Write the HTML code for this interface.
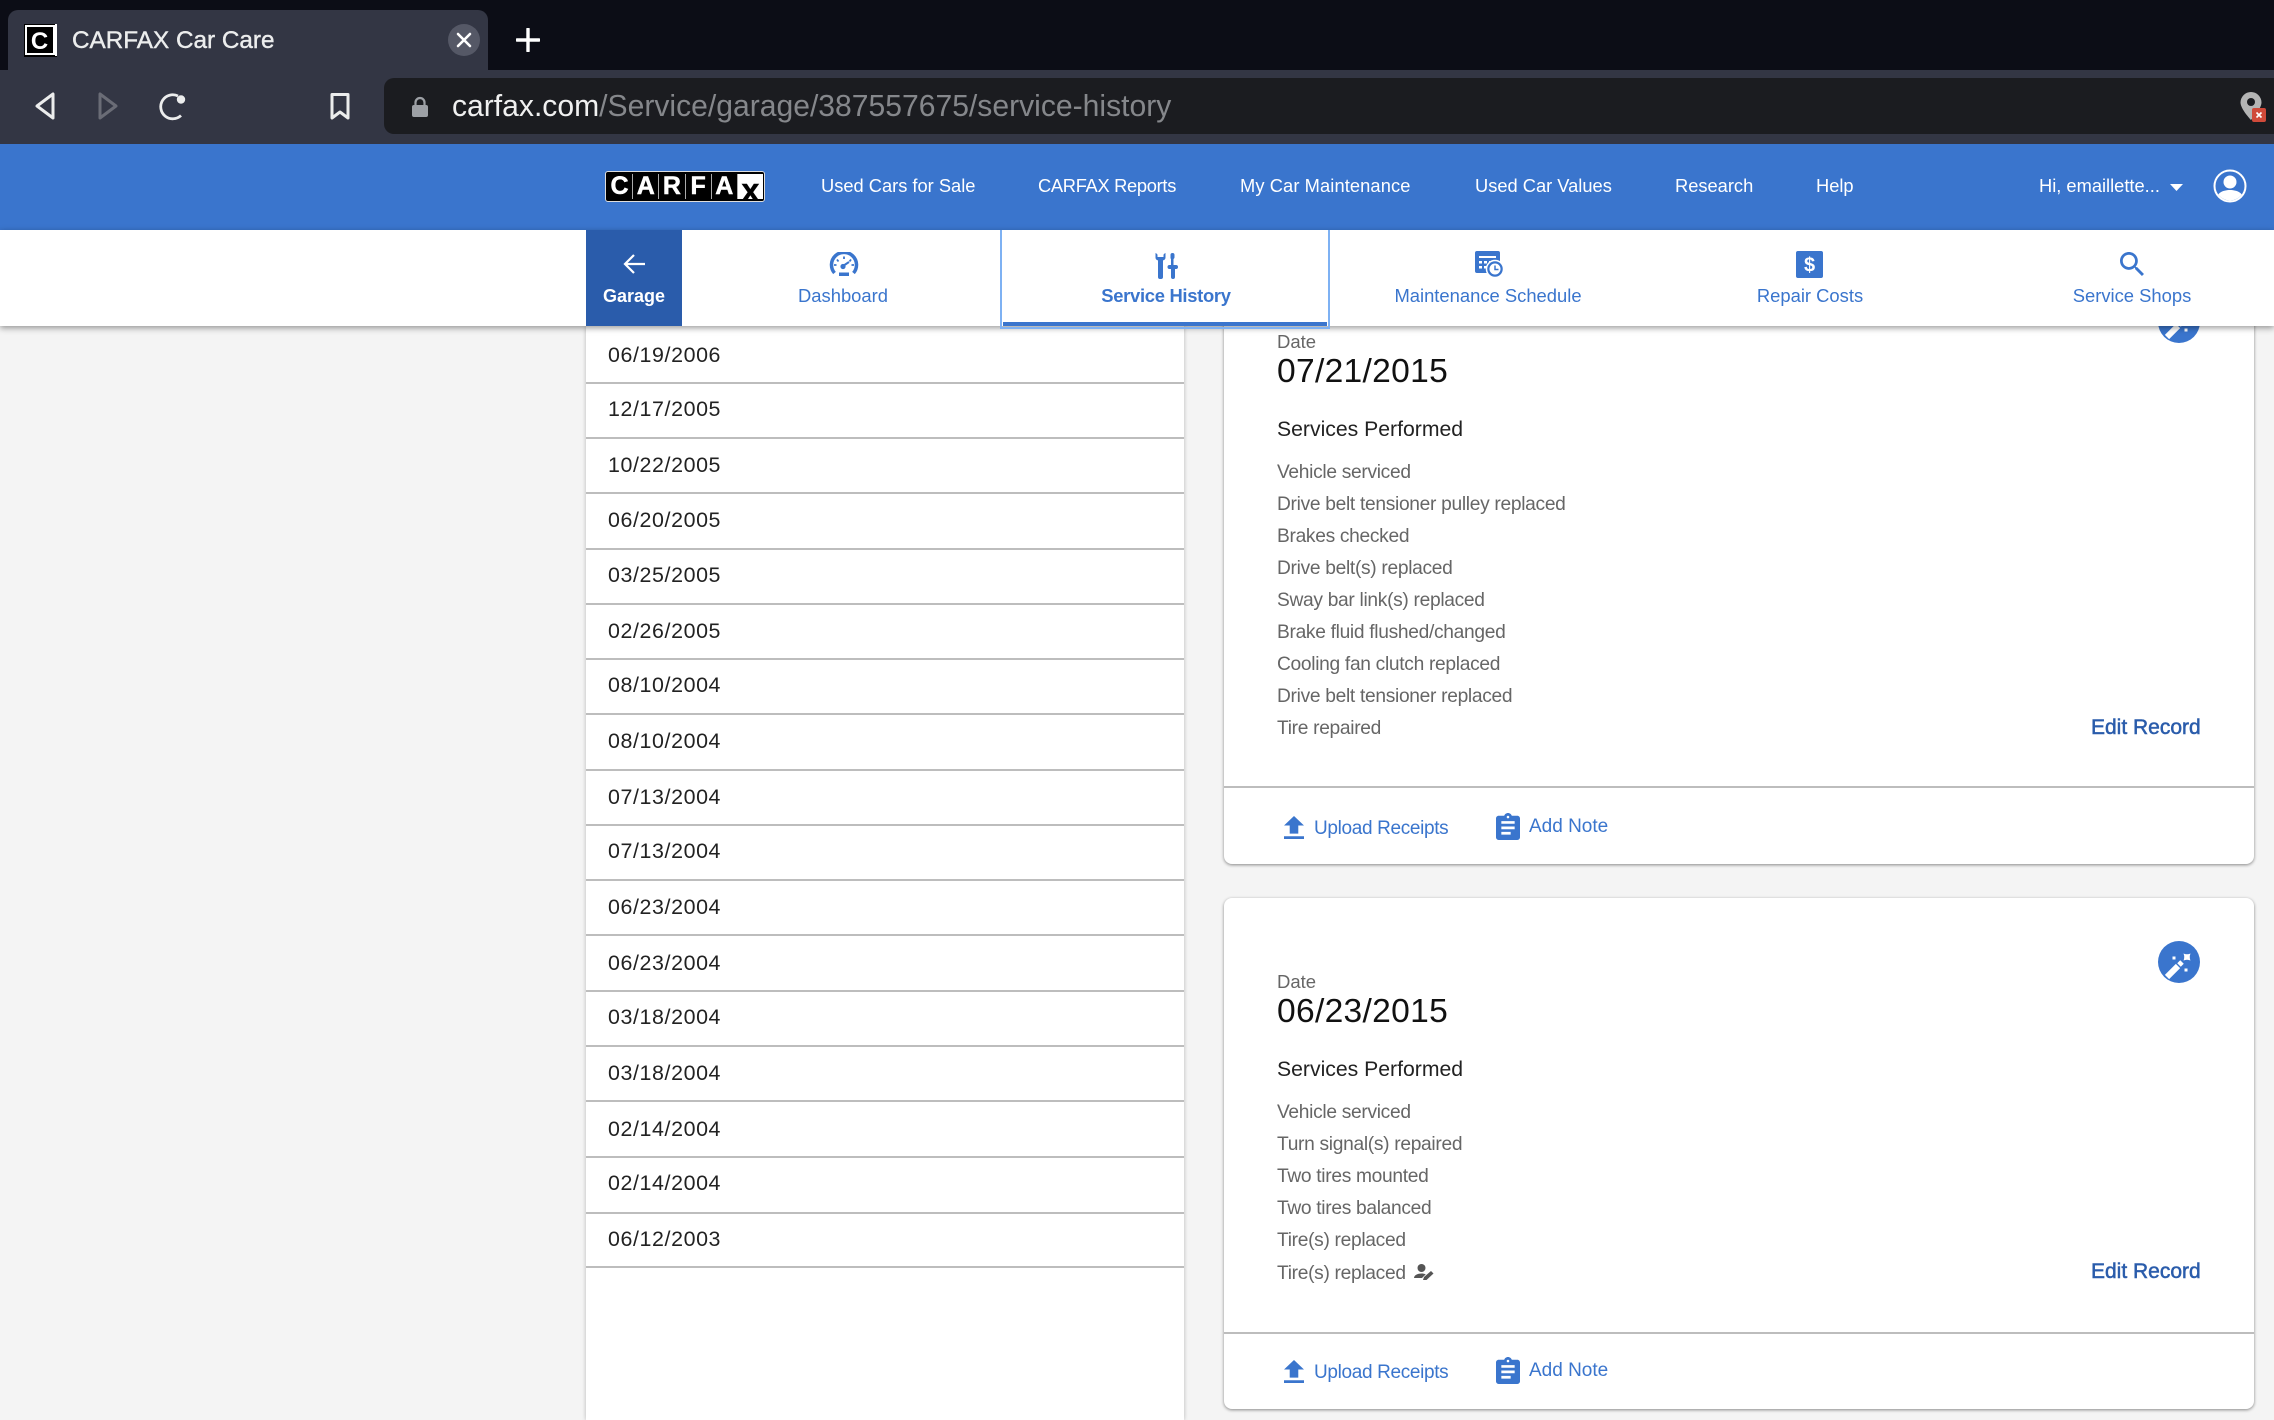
<!DOCTYPE html>
<html><head><meta charset="utf-8"><title>CARFAX Car Care</title>
<style>
html,body{margin:0;padding:0;width:2274px;height:1420px;overflow:hidden;background:#f4f4f4;font-family:"Liberation Sans",sans-serif}
.a{position:absolute}
.t{position:absolute;white-space:nowrap;line-height:0;margin-top:1px}
.c{transform:translateX(-50%)}
.n{font-size:18.3px;color:#fff;margin-top:1px}
.s{font-size:18.400px;color:#3a75cd}
.d{font-size:21.4px;color:#222;left:608px;letter-spacing:.6px}
.l{height:2px;background:#bdbdbd;left:586px;width:598px}
.li{font-size:19.2px;color:#666;left:1277px;letter-spacing:-.31px;margin-top:2px}
.dt{font-size:18.5px;color:#666;left:1277px;margin-top:0}
.dv{font-size:33.6px;color:#111;left:1277px;letter-spacing:.3px}
.sp{font-size:21.2px;color:#222;left:1277px;margin-top:2px}
.er{font-size:21px;color:#2a5cab;-webkit-text-stroke:.5px #2a5cab;left:2091px;margin-top:1.500px}
.u{font-size:19px;color:#3a75cd;margin-top:2px}
.card{position:absolute;left:1224px;width:1030px;background:#fff;border-radius:8px;box-shadow:0 1px 3px rgba(0,0,0,.45)}
</style></head><body>

<div class="a" style="left:0;top:0;width:2274px;height:70px;background:#0c0d16"></div>
<div class="a" style="left:8px;top:10px;width:480px;height:60px;background:#333644;border-radius:10px 10px 0 0"></div>
<div class="a" style="left:0;top:70px;width:2274px;height:74px;background:#333644"></div>
<div class="a" style="left:384px;top:78px;width:1890px;height:56px;background:#1b1c20;border-radius:10px 0 0 10px"></div>

<svg class="a" style="left:24px;top:24px" width="33" height="33" viewBox="0 0 33 33"><rect width="33" height="33" fill="#000"/><rect x="2" y="2" width="28" height="28" fill="none" stroke="#fff" stroke-width="2"/><rect x="31" y="0" width="2" height="32" fill="#fff"/><text x="15.5" y="25" font-family="Liberation Sans" font-size="24" font-weight="bold" fill="#fff" text-anchor="middle">C</text></svg>
<div class="t" style="left:72px;top:40px;margin-top:.5px;font-size:24.3px;color:#eceded;-webkit-text-stroke:.4px #eceded">CARFAX Car Care</div>
<div class="a" style="left:448px;top:24px;width:32px;height:32px;border-radius:50%;background:#555866"></div>
<svg class="a" style="left:448px;top:24px" width="32" height="32"><path d="M10 10L22 22M22 10L10 22" stroke="#fff" stroke-width="2.6" stroke-linecap="round"/></svg>
<svg class="a" style="left:516px;top:28px" width="24" height="24"><path d="M12 1V23M1 12H23" stroke="#fff" stroke-width="3.4" stroke-linecap="round"/></svg>

<svg class="a" style="left:34px;top:91px" width="22" height="30"><path d="M19 3V27L3 15Z" fill="none" stroke="#eceded" stroke-width="3" stroke-linejoin="round"/></svg>
<svg class="a" style="left:97px;top:91px" width="22" height="30"><path d="M3 3V27L19 15Z" fill="none" stroke="#6a6c76" stroke-width="3" stroke-linejoin="round"/></svg>
<svg class="a" style="left:158px;top:92px" width="30" height="30"><path d="M23 23.5A12 12 0 1 1 20 4" fill="none" stroke="#eceded" stroke-width="2.8"/><circle cx="23" cy="7.5" r="4.2" fill="#eceded"/></svg>
<svg class="a" style="left:329px;top:92px" width="22" height="29"><path d="M3 2.5H19V26L11 20L3 26Z" fill="none" stroke="#eceded" stroke-width="3" stroke-linejoin="round"/></svg>
<svg class="a" style="left:411px;top:96px" width="18" height="22"><path d="M4.5 10V6.5a4.5 4.5 0 0 1 9 0V10" fill="none" stroke="#9da0a5" stroke-width="2.2"/><rect x="1" y="9" width="16" height="12" rx="2" fill="#9da0a5"/></svg>
<div class="t" style="left:452px;top:106px;margin-top:1px;font-size:30.1px"><span style="color:#f0f0f0">carfax.com</span><span style="color:#85878b">/Service/garage/387557675/service-history</span></div>
<svg class="a" style="left:2238px;top:90px" width="30" height="34"><path d="M13 2a10.500 10.500 0 0 0-10.500 10.500C2.500 19 13 30 13 30s10.500-11 10.500-17.500A10.500 10.500 0 0 0 13 2z" fill="#b4b4b4"/><circle cx="13" cy="12" r="4" fill="#1b1c20"/><rect x="14" y="18" width="14" height="14" rx="2" fill="#d04a3a"/><path d="M18.500 22.500L23.500 27.500M23.500 22.500L18.500 27.500" stroke="#fff" stroke-width="1.600"/></svg>

<div class="a" style="left:0;top:144px;width:2274px;height:86px;background:#3a75cd"></div>
<div class="a" style="left:605px;top:171px;width:160px;height:31px;background:#000;border:1px solid #ddd;box-sizing:border-box;border-radius:3px;display:flex;padding:2px 1px;font-weight:bold;font-size:25px;color:#fff;line-height:25px;text-align:center;-webkit-text-stroke:.5px #fff">
<span style="flex:1;border-right:1px solid #aaa">C</span><span style="flex:1;border-right:1px solid #aaa">A</span><span style="flex:1;border-right:1px solid #aaa">R</span><span style="flex:1;border-right:1px solid #aaa">F</span><span style="flex:1;border-right:1px solid #aaa">A</span><span style="flex:1;background:#fff;color:#000;font-size:32px;line-height:32px;overflow:hidden;-webkit-text-stroke:.5px #000">x</span></div>
<div class="t n" style="left:821px;top:185px">Used Cars for Sale</div>
<div class="t n" style="left:1038px;top:185px;letter-spacing:-.3px">CARFAX Reports</div>
<div class="t n" style="left:1240px;top:185px;letter-spacing:.1px">My Car Maintenance</div>
<div class="t n" style="left:1475px;top:185px">Used Car Values</div>
<div class="t n" style="left:1675px;top:185px">Research</div>
<div class="t n" style="left:1816px;top:185px">Help</div>
<div class="t n" style="left:2039px;top:185px">Hi, emaillette...</div>
<svg class="a" style="left:2170px;top:184px" width="13" height="7"><path d="M0 0H13L6.500 7Z" fill="#fff"/></svg>
<svg class="a" style="left:2213px;top:169px" width="34" height="34"><defs><clipPath id="uc"><circle cx="17" cy="17" r="14.500"/></clipPath></defs><circle cx="17" cy="17" r="15.500" fill="none" stroke="#fff" stroke-width="2"/><g clip-path="url(#uc)" fill="#fff"><circle cx="17" cy="13" r="6.500"/><path d="M3 32C3 24 10 21 17 21S31 24 31 32Z"/></g></svg>

<!-- main content -->
<div class="a" style="left:586px;top:326px;width:598px;height:1094px;background:#fff;box-shadow:0 0 4px rgba(0,0,0,.25)"></div>
<div class="t d" style="top:354px">06/19/2006</div><div class="a l" style="top:382px"></div>
<div class="t d" style="top:408px">12/17/2005</div><div class="a l" style="top:437px"></div>
<div class="t d" style="top:464px">10/22/2005</div><div class="a l" style="top:492px"></div>
<div class="t d" style="top:519px">06/20/2005</div><div class="a l" style="top:548px"></div>
<div class="t d" style="top:574px">03/25/2005</div><div class="a l" style="top:603px"></div>
<div class="t d" style="top:630px">02/26/2005</div><div class="a l" style="top:658px"></div>
<div class="t d" style="top:684px">08/10/2004</div><div class="a l" style="top:713px"></div>
<div class="t d" style="top:740px">08/10/2004</div><div class="a l" style="top:769px"></div>
<div class="t d" style="top:796px">07/13/2004</div><div class="a l" style="top:824px"></div>
<div class="t d" style="top:850px">07/13/2004</div><div class="a l" style="top:879px"></div>
<div class="t d" style="top:906px">06/23/2004</div><div class="a l" style="top:934px"></div>
<div class="t d" style="top:962px">06/23/2004</div><div class="a l" style="top:990px"></div>
<div class="t d" style="top:1016px">03/18/2004</div><div class="a l" style="top:1045px"></div>
<div class="t d" style="top:1072px">03/18/2004</div><div class="a l" style="top:1100px"></div>
<div class="t d" style="top:1128px">02/14/2004</div><div class="a l" style="top:1156px"></div>
<div class="t d" style="top:1182px">02/14/2004</div><div class="a l" style="top:1212px"></div>
<div class="t d" style="top:1238px">06/12/2003</div><div class="a l" style="top:1266px"></div>

<!-- card 1 -->
<div class="card" style="top:258px;height:606px"></div>
<svg class="a" style="left:2158px;top:301px" width="42" height="42"><circle cx="21" cy="21" r="21" fill="#3a75cd"/><path d="M9 36L20 25" stroke="#fff" stroke-width="6"/><path d="M21 24L24 21" stroke="#fff" stroke-width="5"/><path d="M25.500 12.500Q29 14 32.500 12.500Q31 16 32.500 19.500Q29 18 25.500 19.500Q27 16 25.500 12.500Z" fill="#fff"/><rect x="14.500" y="15.500" width="3" height="3" fill="#fff"/><rect x="26.500" y="27.500" width="3" height="3" fill="#fff"/></svg>
<div class="t dt" style="top:342px">Date</div>
<div class="t dv" style="top:371px">07/21/2015</div>
<div class="t sp" style="top:428px">Services Performed</div>
<div class="t li" style="top:471px">Vehicle serviced</div>
<div class="t li" style="top:503px">Drive belt tensioner pulley replaced</div>
<div class="t li" style="top:535px">Brakes checked</div>
<div class="t li" style="top:567px">Drive belt(s) replaced</div>
<div class="t li" style="top:599px">Sway bar link(s) replaced</div>
<div class="t li" style="top:631px">Brake fluid flushed/changed</div>
<div class="t li" style="top:663px">Cooling fan clutch replaced</div>
<div class="t li" style="top:695px">Drive belt tensioner replaced</div>
<div class="t li" style="top:727px">Tire repaired</div>
<div class="t er" style="top:726px">Edit Record</div>
<div class="a" style="left:1224px;top:786px;width:1030px;height:2px;background:#bdbdbd"></div>
<svg class="a" style="left:1284px;top:816px" width="20" height="23" viewBox="5 3 14 17" preserveAspectRatio="none"><path d="M9 16h6v-6h4l-7-7-7 7h4zm-4 2h14v2H5z" fill="#3a75cd"/></svg>
<div class="t u" style="left:1314px;top:827px;letter-spacing:-.34px">Upload Receipts</div>
<svg class="a" style="left:1496px;top:813px" width="24" height="27" viewBox="3 1 18 20" preserveAspectRatio="none"><path d="M19 3h-4.180C14.400 1.840 13.300 1 12 1c-1.300 0-2.400.840-2.820 2H5c-1.100 0-2 .900-2 2v14c0 1.100.900 2 2 2h14c1.100 0 2-.900 2-2V5c0-1.100-.900-2-2-2zm-7 0c.550 0 1 .450 1 1s-.450 1-1 1-1-.450-1-1 .450-1 1-1zm2 14H7v-2h7v2zm3-4H7v-2h10v2zm0-4H7V7h10v2z" fill="#3a75cd"/></svg>
<div class="t u" style="left:1529px;top:825px">Add Note</div>

<!-- card 2 -->
<div class="card" style="top:898px;height:511px"></div>
<svg class="a" style="left:2158px;top:941px" width="42" height="42"><circle cx="21" cy="21" r="21" fill="#3a75cd"/><path d="M9 36L20 25" stroke="#fff" stroke-width="6"/><path d="M21 24L24 21" stroke="#fff" stroke-width="5"/><path d="M25.500 12.500Q29 14 32.500 12.500Q31 16 32.500 19.500Q29 18 25.500 19.500Q27 16 25.500 12.500Z" fill="#fff"/><rect x="14.500" y="15.500" width="3" height="3" fill="#fff"/><rect x="26.500" y="27.500" width="3" height="3" fill="#fff"/></svg>
<div class="t dt" style="top:982px">Date</div>
<div class="t dv" style="top:1011px">06/23/2015</div>
<div class="t sp" style="top:1068px">Services Performed</div>
<div class="t li" style="top:1111px">Vehicle serviced</div>
<div class="t li" style="top:1143px">Turn signal(s) repaired</div>
<div class="t li" style="top:1175px">Two tires mounted</div>
<div class="t li" style="top:1207px">Two tires balanced</div>
<div class="t li" style="top:1239px">Tire(s) replaced</div>
<div class="t li" style="top:1272px">Tire(s) replaced</div>
<svg class="a" style="left:1414px;top:1263px" width="21" height="19"><circle cx="7.500" cy="5" r="4" fill="#555"/><path d="M0 15c0-3 4-4.500 7.500-4.500 1.500 0 3 .3 4.300.8L8 15Z" fill="#555"/><path d="M9 17l1-3 7-6 2.500 2.500-7 6.500z" fill="#555"/></svg>
<div class="t er" style="top:1270px">Edit Record</div>
<div class="a" style="left:1224px;top:1332px;width:1030px;height:2px;background:#bdbdbd"></div>
<svg class="a" style="left:1284px;top:1360px" width="20" height="23" viewBox="5 3 14 17" preserveAspectRatio="none"><path d="M9 16h6v-6h4l-7-7-7 7h4zm-4 2h14v2H5z" fill="#3a75cd"/></svg>
<div class="t u" style="left:1314px;top:1371px;letter-spacing:-.34px">Upload Receipts</div>
<svg class="a" style="left:1496px;top:1357px" width="24" height="27" viewBox="3 1 18 20" preserveAspectRatio="none"><path d="M19 3h-4.180C14.400 1.840 13.300 1 12 1c-1.300 0-2.400.840-2.820 2H5c-1.100 0-2 .900-2 2v14c0 1.100.900 2 2 2h14c1.100 0 2-.900 2-2V5c0-1.100-.900-2-2-2zm-7 0c.550 0 1 .450 1 1s-.450 1-1 1-1-.450-1-1 .450-1 1-1zm2 14H7v-2h7v2zm3-4H7v-2h10v2zm0-4H7V7h10v2z" fill="#3a75cd"/></svg>
<div class="t u" style="left:1529px;top:1369px">Add Note</div>

<!-- sub nav -->
<div class="a" style="left:0;top:230px;width:2274px;height:96px;background:#fff;box-shadow:0 2px 6px rgba(0,0,0,.4)"></div>
<div class="a" style="left:586px;top:230px;width:96px;height:96px;background:#2a5cab"></div>
<svg class="a" style="left:623px;top:253px" width="23" height="22"><path d="M22 11H3M11 2L2 11L11 20" fill="none" stroke="#fff" stroke-width="2.200"/></svg>
<div class="t c" style="left:634px;top:295px;font-size:18px;font-weight:bold;color:#fff">Garage</div>
<svg class="a" style="left:829px;top:252px" width="30" height="25"><path d="M5.500 21A12.500 12.500 0 1 1 24.500 21" fill="none" stroke="#3a75cd" stroke-width="3.500"/><path d="M15 4.500V7M8 7.500L9.500 9.500M22 7.500L20.500 9.500M5 13H7.500M25 13H22.500" stroke="#3a75cd" stroke-width="1.800"/><circle cx="14" cy="14.500" r="2.600" fill="#3a75cd"/><path d="M14 14L20 10" stroke="#3a75cd" stroke-width="2"/><rect x="10" y="20.500" width="10" height="3.500" fill="#3a75cd"/></svg>
<div class="t c s" style="left:843px;top:295px">Dashboard</div>
<div class="a" style="left:1000px;top:230px;width:330px;height:99px;box-sizing:border-box;border:2px solid #7eb1f3;border-top:0"></div>
<div class="a" style="left:1003px;top:322px;width:324px;height:4px;background:#3a75cd"></div>
<svg class="a" style="left:1153px;top:252px" width="26" height="27"><path d="M2.500 1V5.500C2.500 7.500 4 8 5 8.500V25a2 2 0 0 0 2 2h1a2 2 0 0 0 2-2V8.500C11 8 12.500 7.500 12.500 5.500V1C11.500 1.500 10.500 2 10.500 3V5H4.500V3C4.500 2 3.500 1.500 2.500 1Z" fill="#3a75cd"/><path d="M19.500 1a2 2 0 0 1 2 2v2.500a2 2 0 0 1-1 1.500v6h2.500a1 1 0 0 1 0 4H22v8a2 2 0 0 1-4 0v-8h-1.500a1 1 0 0 1 0-4H18V7a2 2 0 0 1-.5-1.500V3a2 2 0 0 1 2-2Z" fill="#3a75cd"/></svg>
<div class="t c s" style="left:1166px;top:295px;font-weight:bold;letter-spacing:-.3px">Service History</div>
<svg class="a" style="left:1474px;top:251px" width="30" height="27"><rect x="1" y="0" width="25" height="22" rx="2" fill="#3a75cd"/><rect x="5" y="5" width="17" height="2" fill="#fff"/><path d="M5 10h3v2.500H5zM10 10h3v2.500h-3zM15 10h3v2.500h-3zM5 15h3v2.500H5zM10 15h3v2.500h-3z" fill="#fff"/><circle cx="21" cy="18" r="8.500" fill="#3a75cd" stroke="#fff" stroke-width="1.500"/><circle cx="21" cy="18" r="5.500" fill="#fff"/><path d="M21 14.500V18.500H24.500" fill="none" stroke="#3a75cd" stroke-width="1.500"/></svg>
<div class="t c s" style="left:1488px;top:295px">Maintenance Schedule</div>
<svg class="a" style="left:1796px;top:251px" width="27" height="27"><rect width="27" height="27" rx="2" fill="#3a75cd"/><text x="13.500" y="20.500" font-family="Liberation Sans" font-size="20" font-weight="bold" fill="#fff" text-anchor="middle">$</text></svg>
<div class="t c s" style="left:1810px;top:295px">Repair Costs</div>
<svg class="a" style="left:2120px;top:252px" width="24" height="24" viewBox="3 3 17.500 17.500"><path d="M15.500 14h-.790l-.280-.270C15.410 12.590 16 11.110 16 9.500 16 5.910 13.090 3 9.500 3S3 5.910 3 9.500 5.910 16 9.500 16c1.610 0 3.090-.590 4.230-1.570l.270.280v.790l5 4.990L20.490 19l-4.990-5zm-6 0C7.010 14 5 11.990 5 9.500S7.010 5 9.500 5 14 7.010 14 9.500 11.990 14 9.500 14z" fill="#3a75cd"/></svg>
<div class="t c s" style="left:2132px;top:295px">Service Shops</div>
</body></html>
